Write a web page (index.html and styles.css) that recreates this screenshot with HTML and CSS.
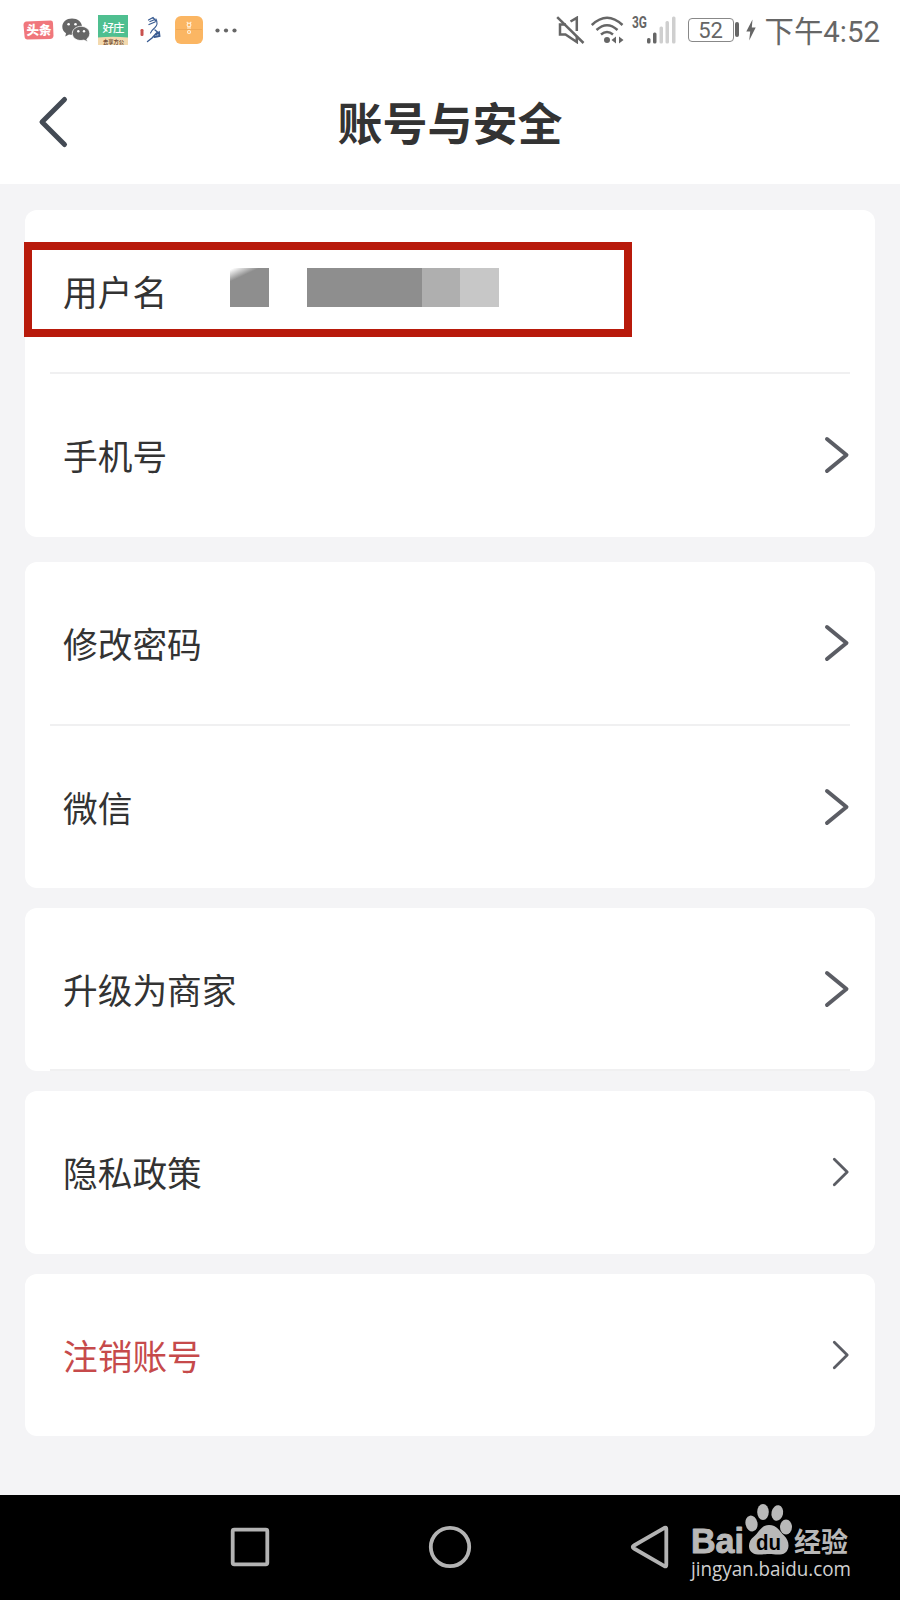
FILE: index.html
```html
<!DOCTYPE html>
<html lang="zh-CN">
<head>
  <meta charset="UTF-8" />
  <meta name="viewport" content="width=device-width, initial-scale=1.0" />
  <title>账号与安全</title>
  <link rel="stylesheet" href="styles.css">
</head>
<body>
  <div class="status-bar">
    <div class="status-left">
      <svg class="toutiao" width="31" height="20" viewBox="0 0 31 20">
        <path d="M3 1.5 L28 0.5 Q30 0.5 30 3 L30.5 16 Q30 19 27 19 L4 19.5 Q1.500 19 1.500 16 L0.500 5 Q0.500 2 3 1.500Z" fill="#f0777c" />
        <text x="3.500" y="15" textLength="25">头条</text>
      </svg>
      <svg class="wechat" width="28" height="24" viewBox="0 0 28 24">
        <g fill="#666">
          <path d="M10 0.500 C4.500 0.500 0.300 4 0.300 8.700 C0.300 11.500 1.700 13.700 4 15.200 L3.300 18.500 L7 16.400 C8 16.700 9 16.800 10.500 16.800 C15.800 16.800 20 13.300 20 8.700 C20 4 15.500 0.500 10 0.500Z" />
          <path d="M19 8.300 C14.300 8.300 10.300 11.300 10.300 15.500 C10.300 19.600 14 22.500 19 22.500 L22 22.100 L25.500 23.800 L24.800 21 C26.600 19.700 27.800 17.700 27.800 15.500 C27.800 11.300 23.500 8.300 19 8.300Z" stroke="#fff" stroke-width="0.800" />
        </g>
        <g fill="#fff">
          <circle cx="6.600" cy="6.300" r="1.300" />
          <circle cx="13.500" cy="6.300" r="1.300" />
          <circle cx="16.300" cy="13.300" r="1.200" />
          <circle cx="22" cy="13.300" r="1.200" />
        </g>
      </svg>
      <svg class="haozhuang" width="30" height="30" viewBox="0 0 30 30">
        <rect width="30" height="30" fill="#4fbf90" />
        <path d="M0 22.500 Q15 21 30 22.500 V30 H0Z" fill="#f3d9ae" />
        <text class="big" x="4.500" y="16.500" textLength="22">好庄</text>
        <text class="small" x="5" y="28.500" textLength="21">去享方公</text>
      </svg>
      <svg class="horse" width="21" height="28" viewBox="0 0 21 28">
        <rect x="0.500" y="13" width="3" height="7" rx="1.200" fill="#c9524f" />
        <g fill="none" stroke="#3a5c92" stroke-linecap="round">
          <path d="M8.500 4 L13 1.500 L16 5 M10 5.500 L15 3.500 M9 8.500 L15 6" stroke-width="1.300" />
          <path d="M16 3 Q18.500 8 15 11.500 Q12 14 10.500 17" stroke-width="1.100" />
          <path d="M15 14 L17.500 16 L12 22 L7.500 25.500" stroke-width="1.400" />
          <path d="M16 18.500 L19 16.500 L19.500 20 L14.500 21" stroke-width="1.900" />
        </g>
      </svg>
      <svg class="box-app" width="28" height="28" viewBox="0 0 28 28">
        <rect width="28" height="28" rx="6" fill="#fbb663" />
        <path d="M1 13.500 H27" stroke="#e9a353" stroke-width="0.700" />
        <g fill="none" stroke="#fff1dc" stroke-width="1.100">
          <circle cx="14" cy="9" r="1.900" />
          <circle cx="14" cy="16" r="1.500" />
          <path d="M11.700 5.800 L12.800 7 M16.300 5.800 L15.200 7 M12 12 H16" />
        </g>
      </svg>
      <svg class="more" width="22" height="5" viewBox="0 0 22 5" fill="#666">
        <circle cx="2.500" cy="2.500" r="2.100" />
        <circle cx="11" cy="2.500" r="2.100" />
        <circle cx="19.500" cy="2.500" r="2.100" />
      </svg>
    </div>

    <div class="status-right">
      <svg class="mute" width="29" height="28" viewBox="0 0 29 28" fill="none" stroke="#666" stroke-width="2.500">
        <path d="M1.200 1.200 L27.500 27" />
        <path d="M10 8.500 H4 V18.500 H9.500 L20.800 26 V20" />
        <path d="M14.500 5.500 L20.800 1.800 V15" />
      </svg>
      <svg class="wifi" width="34" height="28" viewBox="0 0 34 28">
        <g fill="none" stroke="#666" stroke-width="2.500">
          <path d="M0.800 9 Q16 -5.500 31.500 9" />
          <path d="M5.500 14 Q16 4.500 26.500 14" />
          <path d="M10 18.500 Q16 13.500 22 18.500" />
        </g>
        <circle cx="16" cy="24" r="3" fill="#666" />
        <path d="M20.500 24 L25 20.500 V27.500Z M32.500 24 L28 20.500 V27.500Z" fill="#666" />
      </svg>
      <svg class="signal" width="45" height="34" viewBox="0 -3 45 34">
        <text x="1" y="11.500" textLength="15" lengthAdjust="spacingAndGlyphs">3G</text>
        <g fill="#666">
          <rect x="16" y="22" width="3.500" height="5.500" rx="1.500" />
          <rect x="22" y="16.500" width="3.500" height="11" rx="1.500" />
        </g>
        <g fill="#cfcfcf">
          <rect x="28.500" y="10.500" width="3.500" height="17" rx="1.500" />
          <rect x="34.500" y="5" width="3.500" height="22.500" rx="1.500" />
          <rect x="41" y="0.500" width="3.500" height="27" rx="1.500" />
        </g>
      </svg>
      <div class="battery">52</div>
      <svg class="bolt" width="10" height="22" viewBox="0 0 10 22">
        <path d="M6.500 0.500 L0.300 12.500 H4.200 L3.200 21.500 L9.700 8.500 H5.800Z" fill="#666" />
      </svg>
      <span class="time">下午4:52</span>
    </div>
  </div>

  <header>
    <svg class="back" width="32" height="54" viewBox="0 0 32 54">
      <path d="M27.500 4.500 L5 27 L27.500 49.500" />
    </svg>
    <h1>账号与安全</h1>
  </header>

  <main class="container">
    <section class="card">
      <div class="row line">
        <span>用户名</span>
        <div class="mosaic">
          <i class="first"></i>
          <i class="wide"></i>
          <i class="mid"></i>
          <i class="light"></i>
        </div>
      </div>
      <div class="row">
        <span>手机号</span>
        <svg class="arrow" width="26" height="38" viewBox="0 0 26 38"><path d="M3 3 L22.500 19 L3 35" /></svg>
      </div>
      <div class="highlight"></div>
    </section>

    <section class="card second">
      <div class="row line">
        <span>修改密码</span>
        <svg class="arrow" width="26" height="38" viewBox="0 0 26 38"><path d="M3 3 L22.500 19 L3 35" /></svg>
      </div>
      <div class="row">
        <span>微信</span>
        <svg class="arrow" width="26" height="38" viewBox="0 0 26 38"><path d="M3 3 L22.500 19 L3 35" /></svg>
      </div>
    </section>

    <section class="card">
      <div class="row line">
        <span>升级为商家</span>
        <svg class="arrow" width="26" height="38" viewBox="0 0 26 38"><path d="M3 3 L22.500 19 L3 35" /></svg>
      </div>
    </section>

    <section class="card">
      <div class="row">
        <span>隐私政策</span>
        <svg class="arrow thin" width="18" height="30" viewBox="0 0 18 30"><path d="M2.300 2.300 L15.200 15 L2.300 27.700" /></svg>
      </div>
    </section>

    <section class="card">
      <div class="row danger">
        <span>注销账号</span>
        <svg class="arrow thin" width="18" height="30" viewBox="0 0 18 30"><path d="M2.300 2.300 L15.200 15 L2.300 27.700" /></svg>
      </div>
    </section>
  </main>

  <footer>
    <svg width="44" height="44" viewBox="0 0 44 44"><rect x="4.700" y="4.700" width="34.600" height="34.600" rx="1.500" /></svg>
    <svg width="44" height="44" viewBox="0 0 44 44"><circle cx="22" cy="22" r="19.200" /></svg>
    <svg width="44" height="44" viewBox="0 0 44 44"><path d="M36.500 2.800 Q38.300 2 38.300 4 V40 Q38.300 42 36.500 41.200 L6 23.500 Q3.500 22 6 20.500Z" /></svg>

    <svg class="watermark" width="170" height="84" viewBox="0 0 170 84">
      <text class="bai" x="4" y="53" textLength="53" lengthAdjust="spacingAndGlyphs">Bai</text>
      <g class="paw">
        <ellipse cx="64.500" cy="23.500" rx="6" ry="8" transform="rotate(-12 64.500 23.500)" />
        <ellipse cx="76" cy="12" rx="5.800" ry="8" />
        <ellipse cx="90.300" cy="13" rx="5.800" ry="7.800" transform="rotate(12 90.300 13)" />
        <ellipse cx="99" cy="27" rx="6" ry="7.500" />
        <path d="M82 25 C90 25 93 31.500 97 35.500 C104 42 103 54 93 54.500 C88 54.700 86 54 82 54 C78 54 76 54.700 71 54.500 C60 54 59.500 42 67 36.500 C72 32.500 74 25 82 25Z" />
      </g>
      <text class="du" x="69" y="49.500" textLength="25" lengthAdjust="spacingAndGlyphs">du</text>
      <text class="jingyan" x="107" y="51.500" textLength="54">经验</text>
      <text class="url" x="4" y="75.500" textLength="160" lengthAdjust="spacingAndGlyphs">jingyan.baidu.com</text>
    </svg>
  </footer>
</body>
</html>
```
FILE: styles.css
```css
* {
  box-sizing: border-box;
}

body {
  margin: 0;
  width: 900px;
  height: 1600px;
  display: flex;
  flex-direction: column;
  overflow: hidden;
  background: #f4f4f6;
  color: #333;
  font-family: Roboto, "Noto Sans CJK SC", sans-serif;
}

svg {
  display: block;
  flex-shrink: 0;
}

/* Status bar */
.status-bar {
  height: 60px;
  padding: 0 20px 0 23px;
  display: flex;
  justify-content: space-between;
  align-items: center;
  background: #fff;
}

.status-left, .status-right {
  display: flex;
  align-items: center;
}

.wechat {
  margin-left: 8px;
}

.haozhuang {
  margin-left: 8px;
}

.horse {
  margin-left: 12px;
}

.box-app {
  margin-left: 14px;
}

.more {
  margin-left: 12px;
}

.toutiao text {
  font-size: 12.5px;
  font-weight: 900;
  fill: #fff;
}

.haozhuang .big {
  font-size: 11.5px;
  font-weight: 500;
  fill: #fff;
}

.haozhuang .small {
  font-size: 5.3px;
  font-weight: bold;
  fill: #755038;
}

.wifi {
  margin-left: 6px;
}

.signal {
  margin-left: 6px;
}

.signal text {
  font-size: 16px;
  font-weight: bold;
  fill: #666;
}

.battery {
  position: relative;
  width: 46px;
  height: 24px;
  margin-left: 12px;
  border: 1.5px solid #888;
  border-radius: 4px;
  color: #666;
  font-size: 22px;
  line-height: 23px;
  text-align: center;
}

.battery::after {
  content: '';
  position: absolute;
  top: 3px;
  right: -6px;
  width: 4px;
  height: 15px;
  border-radius: 2px;
  background: #666;
}

.bolt {
  margin-left: 12px;
}

.time {
  margin-left: 9px;
  padding-top: 3px;
  color: #666;
  font-size: 29.4px;
  line-height: 40px;
  white-space: nowrap;
}

/* Title bar */
header {
  height: 124px;
  padding-left: 37px;
  display: flex;
  align-items: center;
  background: #fff;
}

.back path {
  fill: none;
  stroke: #434a54;
  stroke-width: 5;
  stroke-linecap: round;
  stroke-linejoin: round;
}

h1 {
  flex: 1;
  margin: 0 69px 0 0;
  padding-top: 8px;
  font-size: 45px;
  line-height: 60px;
  text-align: center;
}

/* Cards */
.container {
  flex: 1;
  padding: 26px 25px 0;
  display: flex;
  flex-direction: column;
  gap: 20px;
}

.card {
  position: relative;
  padding: 0 25px;
  border-radius: 12px;
  background: #fff;
}

.card.second {
  margin-top: 5px;
}

.row {
  height: 162.5px;
  padding-left: 13px;
  display: flex;
  align-items: center;
  justify-content: space-between;
  font-size: 34.7px;
}

.row.line {
  height: 164px;
  border-bottom: 2px solid #f0f0f1;
}

.row.line:last-child {
  height: 163px;
}

.row.danger {
  color: #c64a4b;
}

.arrow path {
  fill: none;
  stroke: #5b5d64;
  stroke-width: 4;
  stroke-linecap: round;
  stroke-linejoin: round;
}

.arrow.thin path {
  stroke-width: 2.8;
}

.mosaic {
  flex: 1;
  display: flex;
  height: 39px;
  margin: 0 0 7px 63px;
}

.mosaic i {
  width: 38.5px;
}

.mosaic .first {
  margin-right: 38px;
  background: linear-gradient(155deg, #fff 3%, #8e8e8e 24%);
}

.mosaic .wide {
  width: 115px;
  background: #8e8e8e;
}

.mosaic .mid {
  background: #afafaf;
}

.mosaic .light {
  background: #c7c7c7;
}

.highlight {
  position: absolute;
  top: 32px;
  left: -1px;
  width: 608px;
  height: 95px;
  border: 8px solid #b81a0b;
}

/* Navigation bar */
footer {
  position: relative;
  height: 105px;
  padding: 30px 228px 0;
  display: flex;
  justify-content: space-between;
  align-items: flex-start;
  background: #000;
  fill: none;
  stroke: #b3b3b3;
  stroke-width: 3.8;
  stroke-linejoin: round;
}

.watermark {
  position: absolute;
  top: 5px;
  left: 687px;
  fill: #b8b8b8;
  stroke: none;
}

.watermark .bai {
  font-family: "Liberation Sans", sans-serif;
  font-size: 35px;
  font-weight: bold;
  stroke: #b8b8b8;
  stroke-width: 1;
}

.watermark .du {
  font-family: "Liberation Sans", sans-serif;
  font-size: 22px;
  font-weight: bold;
  fill: #000;
}

.watermark .jingyan {
  font-size: 27px;
  font-weight: bold;
}

.watermark .url {
  font-family: "Open Sans", sans-serif;
  font-size: 19.5px;
  fill: #d0d0d0;
}
```
